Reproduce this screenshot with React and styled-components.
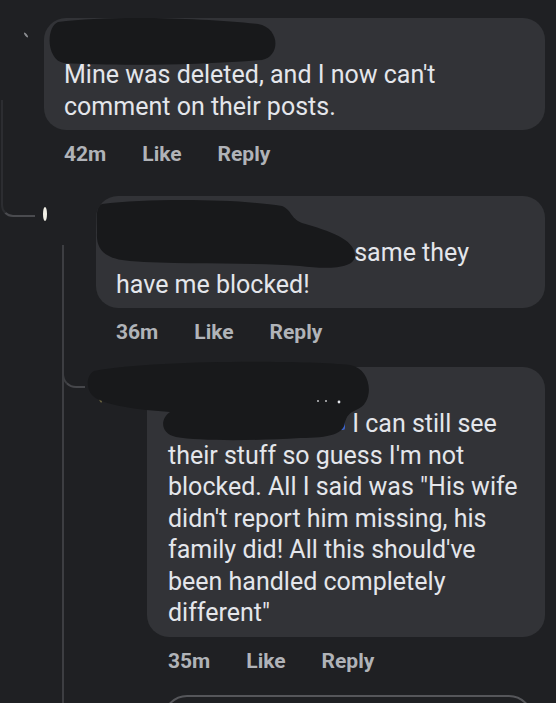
import React from 'react';
import styled, { createGlobalStyle } from 'styled-components';

const GlobalStyle = createGlobalStyle`
  html, body {
    margin: 0;
    padding: 0;
    background: #1f2023;
  }
  body {
    font-family: Roboto, 'Noto Sans', Arial, sans-serif;
  }
`;

const Page = styled.div`
  position: relative;
  display: flex;
  flex-direction: column;
  width: 556px;
  height: 703px;
  overflow: hidden;
  box-sizing: border-box;
  padding-top: 18px;
  background: #1f2023;
`;

const Comment = styled.div`
  display: flex;
  margin-top: ${(p) => p.$gap || 0}px;
  width: 545px;
`;

// avatar column; the pictures are blacked out, only a sliver shows
const AvatarSlot = styled.div`
  flex: 0 0 ${(p) => p.$w}px;
  box-sizing: border-box;
  display: flex;
  justify-content: flex-end;
  align-items: flex-start;
  padding: ${(p) => p.$top}px ${(p) => p.$right}px 0 0;
`;

const AvatarMark = styled.span`
  width: ${(p) => p.$w}px;
  height: ${(p) => p.$h}px;
  border-radius: 50%;
  background: ${(p) => p.$color};
  transform: rotate(${(p) => p.$rot || 0}deg);
`;

const Body = styled.div`
  flex: 1;
  display: flex;
  flex-direction: column;
  min-width: 0;
`;

const Bubble = styled.div`
  position: relative;
  background: #323337;
  border-radius: 22px;
  padding: 41px 22px 8px ${(p) => p.$padLeft || 20}px;
  color: #e4e6eb;
  font-size: 25px;
  line-height: 31.5px;
`;

const TagSpace = styled.span`
  display: inline-block;
  width: ${(p) => p.$w}px;
  height: 1px;
`;

const Actions = styled.div`
  display: flex;
  gap: 36px;
  margin-top: 12px;
  padding-left: ${(p) => p.$padLeft || 20}px;
  color: #b0b3b8;
  font-size: 21px;
  font-weight: 700;
  line-height: 24px;
`;

const Action = styled.span`
  cursor: pointer;
`;

const ReplyBox = styled.div`
  height: 44px;
  margin: 22px 12px 0 16px;
  border: 2px solid #55565a;
  border-radius: 24px;
`;

// thread connectors drawn over the page background
const ParentCurve = styled.div`
  position: absolute;
  left: 1px;
  top: 100px;
  width: 32px;
  height: 115px;
  border-left: 2px solid #2c2d31;
  border-bottom: 2px solid #4a4b4f;
  border-bottom-left-radius: 12px;
`;

const ThreadLine = styled.div`
  position: absolute;
  left: 62px;
  top: 245px;
  bottom: 0;
  width: 2px;
  background: #3d3e42;
`;

const BranchCurve = styled.div`
  position: absolute;
  left: 62px;
  top: 366px;
  width: 21px;
  height: 20px;
  border-left: 2px solid #3d3e42;
  border-bottom: 2px solid #46474b;
  border-bottom-left-radius: 14px;
`;

const Redaction = styled.svg`
  position: absolute;
  left: ${(p) => p.$x}px;
  top: ${(p) => p.$y}px;
  overflow: visible;
  pointer-events: none;
`;

const INK = '#18191b';

const CommentMeta = ({ time, padLeft }) => (
  <Actions $padLeft={padLeft}>
    <Action>{time}</Action>
    <Action>Like</Action>
    <Action>Reply</Action>
  </Actions>
);

export default function App() {
  return (
    <>
      <GlobalStyle />
      <Page>
        <ParentCurve />
        <ThreadLine />
        <BranchCurve />

        <Comment>
          <AvatarSlot $w={44} $top={14} $right={17}>
            <AvatarMark $w={2} $h={6} $rot={-40} $color="#8a8c90" />
          </AvatarSlot>
          <Body>
            <Bubble>
              Mine was deleted, and I now can't comment on their posts.
              <Redaction $x={0} $y={-4} width={240} height={54} viewBox="44 14 240 54">
                <path
                  fill={INK}
                  d="M58 22 C110 15 205 18 258 24 C280 28 281 56 262 60 C200 65 120 66 64 63 C47 61 45 28 58 22 Z"
                />
              </Redaction>
            </Bubble>
            <CommentMeta time="42m" />
          </Body>
        </Comment>

        <Comment $gap={30}>
          <AvatarSlot $w={96} $top={11} $right={49}>
            <AvatarMark $w={4} $h={14} $color="#f1efe6" />
          </AvatarSlot>
          <Body>
            <Bubble>
              <TagSpace $w={232} /> same they have me blocked!
              <Redaction $x={-4} $y={1} width={268} height={74} viewBox="92 198 268 74">
                <path d="M122 260 L128 260" stroke="#4f73d4" strokeWidth="2" />
                <path d="M309 265 L315 265" stroke="#4f73d4" strokeWidth="2" />
                <path
                  fill={INK}
                  d="M102 205 C150 199 240 200 282 207 C292 211 290 219 302 224 C330 232 354 240 355 256 C356 269 330 271 300 267 C250 263 180 266 130 262 C104 260 96 250 97 234 C97 220 95 209 102 205 Z"
                />
              </Redaction>
            </Bubble>
            <CommentMeta time="36m" />
          </Body>
        </Comment>

        <Comment $gap={23}>
          <AvatarSlot $w={147} $top={14} $right={46}>
            <AvatarMark $w={4} $h={22} $rot={-12} $color="#6b6440" />
          </AvatarSlot>
          <Body>
            <Bubble $padLeft={21}>
              <TagSpace $w={178} /> I can still see their stuff so guess I'm not blocked. All I
              said was "His wife didn't report him missing, his family did! All this should've
              been handled completely different"
              <Redaction $x={-63} $y={-9} width={292} height={84} viewBox="84 358 292 84">
                <rect x="337" y="412" width="8" height="18" rx="2" fill="#3d63c9" />
                <path
                  fill={INK}
                  d="M94 371 C150 360 300 360 350 365 C373 369 375 404 356 410 C349 413 347 416 345 422 C344 434 330 438 300 438 C250 441 200 441 176 437 C160 433 160 419 170 412 C140 410 100 405 92 395 C86 388 86 376 94 371 Z"
                />
                <circle cx="318" cy="401" r="1" fill="#bfc1c4" />
                <circle cx="326" cy="401" r="1" fill="#bfc1c4" />
                <circle cx="339" cy="402" r="1.4" fill="#e4e6eb" />
              </Redaction>
            </Bubble>
            <CommentMeta time="35m" padLeft={21} />
            <ReplyBox />
          </Body>
        </Comment>
      </Page>
    </>
  );
}
